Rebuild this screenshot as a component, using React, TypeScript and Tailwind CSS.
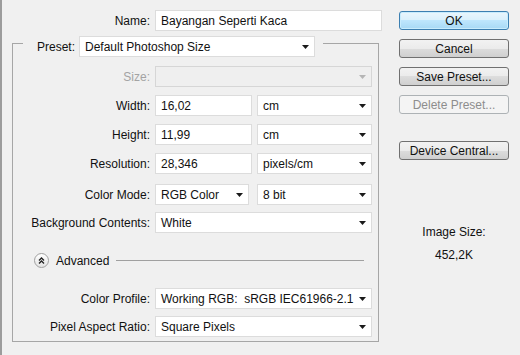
import React from "react"

const Arrow = ({ muted }: { muted?: boolean }) => (
  <svg width="7" height="4" viewBox="0 0 7 4" className="shrink-0">
    <polygon points="0,0 7,0 3.5,4" fill={muted ? "#b5b5b5" : "#1a1a1a"} />
  </svg>
)

const TextBox = ({ value, w }: { value: string; w: string }) => (
  <div className={`${w} h-[21px] bg-white border border-[#dcdcdc] pl-[5px] flex items-center`}>
    {value}
  </div>
)

const Select = ({ value, w, disabled }: { value?: string; w: string; disabled?: boolean }) => (
  <div
    className={`${w} h-[21px] border flex items-center justify-between pl-[5px] pr-[5px] ${
      disabled ? "bg-[#efefef] border-[#d6d6d6]" : "bg-white border-[#dcdcdc]"
    }`}
  >
    <span className="whitespace-pre">{value}</span>
    <Arrow muted={disabled} />
  </div>
)

const Row = ({
  label,
  mt,
  disabled,
  gap = "gap-[5px]",
  children
}: {
  label: string
  mt: string
  disabled?: boolean
  gap?: string
  children: React.ReactNode
}) => (
  <div className={`flex items-center ${mt}`}>
    <div className={`w-[137px] text-right whitespace-nowrap ${disabled ? "text-[#a3a3a3]" : ""}`}>
      {label}
    </div>
    <div className={`flex ml-[5px] ${gap}`}>{children}</div>
  </div>
)

const Button = ({
  label,
  mt,
  primary,
  disabled
}: {
  label: string
  mt: string
  primary?: boolean
  disabled?: boolean
}) => (
  <div
    className={`${mt} w-[110px] h-[19px] rounded-[3px] border flex items-center justify-center leading-none ${
      primary
        ? "border-[#3c7fb1] bg-[linear-gradient(#eaf6fd_0%,#d9f0fc_50%,#bee6fd_50%,#a7d9f5_100%)] shadow-[inset_0_0_0_1px_#c8ecfd]"
        : disabled
        ? "border-[#adb2b5] bg-[#f4f4f4] text-[#8d8d8d]"
        : "border-[#707070] bg-[linear-gradient(#f2f2f2_0%,#ebebeb_50%,#dddddd_50%,#cfcfcf_100%)]"
    }`}
  >
    {label}
  </div>
)

const App = () => {
  return (
    <div className="w-[520px] h-[355px] bg-[#f0f0f0] border-l-2 border-[#9c9c9c] flex text-[12px] text-[#111] font-['Liberation_Sans',Arial,sans-serif] overflow-hidden">
      {/* left column */}
      <div className="w-[380px] pt-[10px]">
        <div className="flex items-center">
          <div className="w-[148px] text-right">Name:</div>
          <div className="ml-[5px]">
            <TextBox value="Bayangan Seperti Kaca" w="w-[227px]" />
          </div>
        </div>

        <fieldset className="ml-[10px] -mt-[2px] w-[367px] border border-[#a6a6a6] pb-[4px]">
          <legend className="ml-[10px] pl-[12px] pr-[8px] pt-[7px]">
            <div className="flex items-center">
              <div className="w-[40px] text-right">Preset:</div>
              <div className="ml-[4px]">
                <Select value="Default Photoshop Size" w="w-[236px]" />
              </div>
            </div>
          </legend>

          <Row label="Size:" mt="mt-[9px]" disabled>
            <Select w="w-[217px]" disabled />
          </Row>
          <Row label="Width:" mt="mt-[8px]">
            <TextBox value="16,02" w="w-[97px]" />
            <Select value="cm" w="w-[115px]" />
          </Row>
          <Row label="Height:" mt="mt-[8px]">
            <TextBox value="11,99" w="w-[97px]" />
            <Select value="cm" w="w-[115px]" />
          </Row>
          <Row label="Resolution:" mt="mt-[8px]">
            <TextBox value="28,346" w="w-[97px]" />
            <Select value="pixels/cm" w="w-[115px]" />
          </Row>
          <Row label="Color Mode:" mt="mt-[10px]" gap="gap-[8px]">
            <Select value="RGB Color" w="w-[94px]" />
            <Select value="8 bit" w="w-[115px]" />
          </Row>
          <Row label="Background Contents:" mt="mt-[7px]">
            <Select value="White" w="w-[217px]" />
          </Row>

          <div className="flex items-center mt-[20px] h-[15px]">
            <div className="ml-[21px] w-[15px] h-[15px] rounded-full border border-[#a0a0a0] bg-[linear-gradient(#ffffff,#e4e4e4)] flex items-center justify-center">
              <svg width="7" height="7" viewBox="0 0 7 7">
                <path d="M1 3.5 L3.5 1 L6 3.5 M1 6.5 L3.5 4 L6 6.5" stroke="#222" strokeWidth="1.3" fill="none" />
              </svg>
            </div>
            <div className="ml-[7px]">Advanced</div>
            <div className="flex-1 ml-[7px] mr-[14px] h-px bg-[#a0a0a0]" />
          </div>

          <Row label="Color Profile:" mt="mt-[20px]">
            <Select value="Working RGB:  sRGB IEC61966-2.1" w="w-[217px]" />
          </Row>
          <Row label="Pixel Aspect Ratio:" mt="mt-[7px]">
            <Select value="Square Pixels" w="w-[217px]" />
          </Row>
        </fieldset>
      </div>

      {/* right column */}
      <div className="ml-[17px] w-[110px] flex flex-col">
        <Button label="OK" mt="mt-[11px]" primary />
        <Button label="Cancel" mt="mt-[9px]" />
        <Button label="Save Preset..." mt="mt-[9px]" />
        <Button label="Delete Preset..." mt="mt-[9px]" disabled />
        <Button label="Device Central..." mt="mt-[27px]" />
        <div className="mt-[63px] text-center">Image Size:</div>
        <div className="mt-[5px] text-center">452,2K</div>
      </div>
    </div>
  )
}

export default App
